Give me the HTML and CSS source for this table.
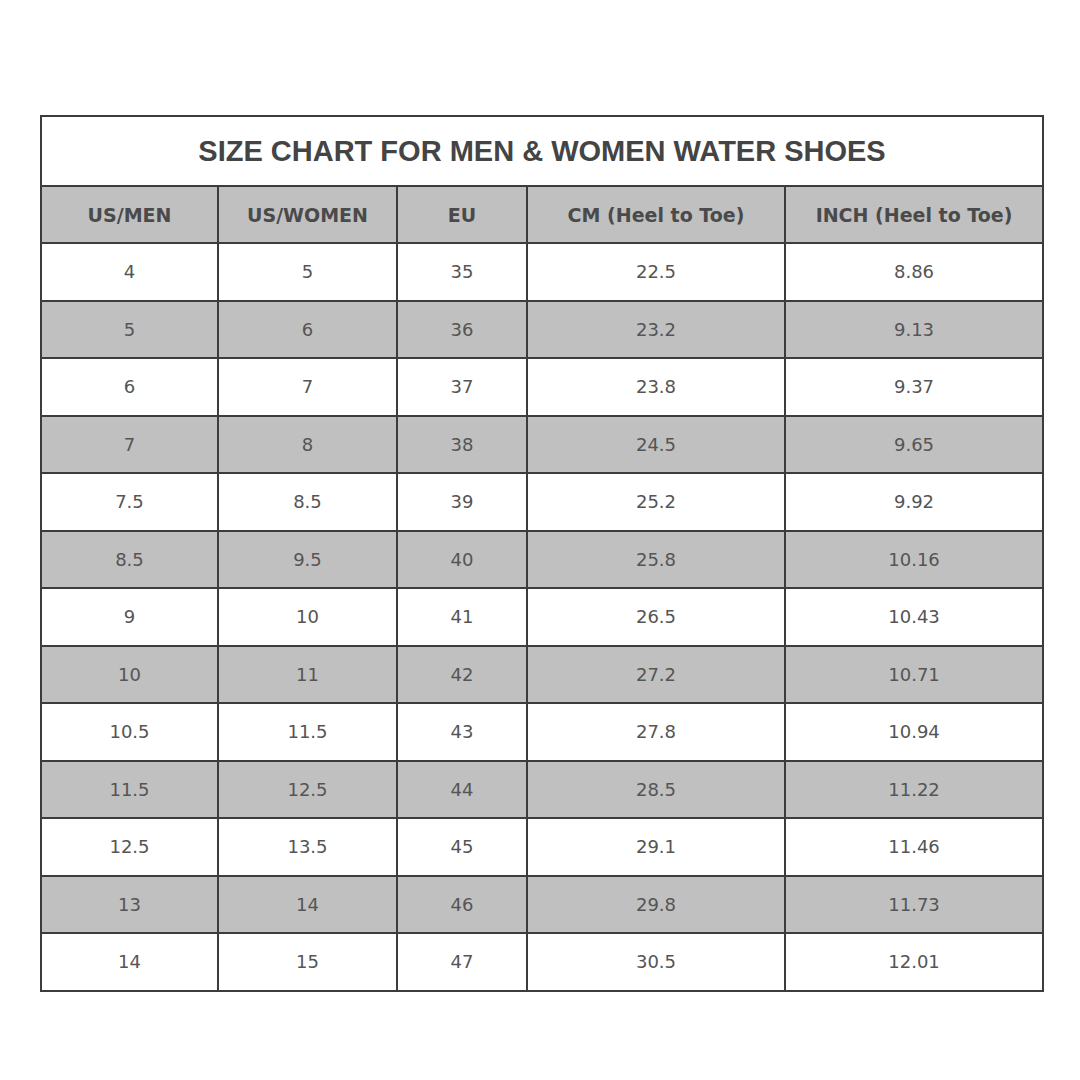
FILE: index.html
```html
<!DOCTYPE html>
<html>
<head>
<meta charset="utf-8">
<link rel="stylesheet" href="styles.css">
</head>
<body>
<div class="wrap">
<table class="chart">
<colgroup>
<col class="c1"><col class="c2"><col class="c3"><col class="c4"><col class="c5">
</colgroup>
<thead>
<tr class="title-row"><th colspan="5" class="title">SIZE CHART FOR MEN &amp; WOMEN WATER SHOES</th></tr>
<tr class="head-row"><th>US/MEN</th><th>US/WOMEN</th><th>EU</th><th>CM (Heel to Toe)</th><th>INCH (Heel to Toe)</th></tr>
</thead>
<tbody>
<tr><td>4</td><td>5</td><td>35</td><td>22.5</td><td>8.86</td></tr>
<tr class="alt"><td>5</td><td>6</td><td>36</td><td>23.2</td><td>9.13</td></tr>
<tr><td>6</td><td>7</td><td>37</td><td>23.8</td><td>9.37</td></tr>
<tr class="alt"><td>7</td><td>8</td><td>38</td><td>24.5</td><td>9.65</td></tr>
<tr><td>7.5</td><td>8.5</td><td>39</td><td>25.2</td><td>9.92</td></tr>
<tr class="alt"><td>8.5</td><td>9.5</td><td>40</td><td>25.8</td><td>10.16</td></tr>
<tr><td>9</td><td>10</td><td>41</td><td>26.5</td><td>10.43</td></tr>
<tr class="alt"><td>10</td><td>11</td><td>42</td><td>27.2</td><td>10.71</td></tr>
<tr><td>10.5</td><td>11.5</td><td>43</td><td>27.8</td><td>10.94</td></tr>
<tr class="alt"><td>11.5</td><td>12.5</td><td>44</td><td>28.5</td><td>11.22</td></tr>
<tr><td>12.5</td><td>13.5</td><td>45</td><td>29.1</td><td>11.46</td></tr>
<tr class="alt"><td>13</td><td>14</td><td>46</td><td>29.8</td><td>11.73</td></tr>
<tr><td>14</td><td>15</td><td>47</td><td>30.5</td><td>12.01</td></tr>
</tbody>
</table>
</div>
</body>
</html>
```
FILE: styles.css
```css
html, body {
  margin: 0;
  padding: 0;
  background: #ffffff;
}
.wrap {
  padding: 115px 0 0 40px;
}
.chart {
  border-collapse: collapse;
  table-layout: fixed;
  width: 1002px;
  font-family: "DejaVu Sans", Verdana, sans-serif;
  color: #555555;
}
.c1 { width: 177px; }
.c2 { width: 179px; }
.c3 { width: 130px; }
.c4 { width: 258px; }
.c5 { width: 258px; }
.chart th, .chart td {
  border: 2px solid #3c3c3c;
  text-align: center;
  padding: 0;
}
.title {
  height: 68px;
  font-family: "Liberation Sans", Arial, sans-serif;
  font-size: 29px;
  font-weight: bold;
  color: #444444;
  background: #ffffff;
  padding-top: 2px;
}
.head-row th {
  height: 55px;
  background: #c0c0c0;
  font-size: 19px;
  font-weight: bold;
  color: #4a4a4a;
}
.chart td {
  height: 55.5px;
  font-size: 18px;
  background: #ffffff;
}
.chart tr.alt td {
  background: #c0c0c0;
}
```
